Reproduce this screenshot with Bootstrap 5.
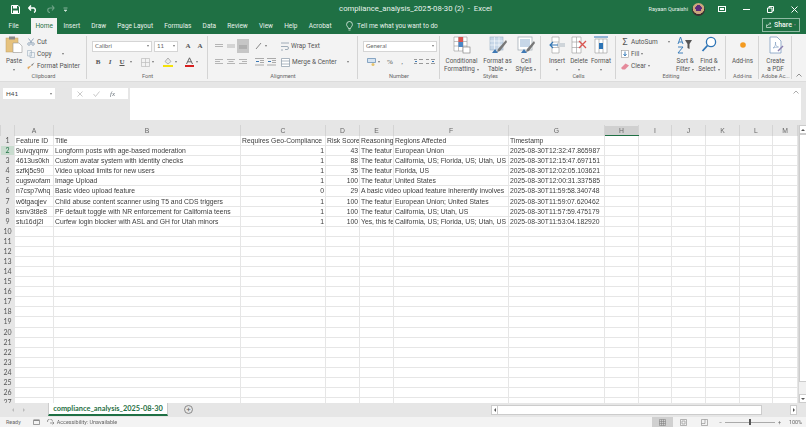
<!DOCTYPE html>
<html lang="en">
<head>
<meta charset="UTF-8">
<title>compliance_analysis_2025-08-30 (2) - Excel</title>
<link href="https://cdn.jsdelivr.net/npm/bootstrap@5.3.0/dist/css/bootstrap.min.css" rel="stylesheet">
<style>
html,body{height:100%;overflow:hidden}
body{background:#e6e6e6;color:#444;font-family:Roboto,"Open Sans",sans-serif;font-size:6.3px;line-height:8px;width:806px}
svg{display:block;flex:none}
.xl-app{width:806px;height:427px;display:flex;flex-direction:column;filter:blur(.35px)}
.xl-green{background:#1f7044;color:#e8f2ec}
.xl-title{height:18px;padding:0 0 0 11px}
.xl-side{flex:1 1 0;min-width:0}
.xl-doc{font-size:7.7px;white-space:pre;margin-left:14px}
.xl-name{font-size:5.5px;margin-right:4px}
.xl-avatar{width:13px;height:13px;border-radius:50%;background:radial-gradient(circle at 50% 40%,#5a2a7a 0 30%,#caa67c 32% 55%,#3a3030 60%);margin-right:5px}
.xl-winbtn{width:24px;display:flex;justify-content:center}
.xl-tabs{height:16px;padding-left:3px}
.xl-tab{padding:0 5.6px;font-size:6.5px;line-height:16px;color:#e8f2ec}
.xl-tab.active{background:#f3f3f3;color:#1f7044;padding:0 4px;margin:0 1px 0 7px}
.xl-tell{font-size:6.5px;margin-left:4px}
.xl-bulb{margin-left:9px}
.xl-share{width:38px;height:14px;margin:-2px 6px 0 auto;border:1px solid #8fbaa3;font-weight:600;font-size:7px;gap:2px}
.xl-ribbon{height:48px;background:#f3f3f3;flex:none;border-bottom:1px solid #dcdcdc}
.rb-group{display:flex;flex-direction:column;flex:none;position:relative;padding:0 1px}
.rb-group::after{content:"";position:absolute;right:0;top:2px;bottom:2px;width:1px;background:#d4d4d4}
.rb-body{flex:1;display:flex;min-height:0;padding-top:2px}
.rb-label{height:9px;line-height:9px;text-align:center;font-size:5.6px;color:#666}
.g-clip{width:87px}.g-font{width:121px}.g-align{width:150px}.g-num{width:82px}.g-styles{width:101px}.g-cells{width:75px}.g-edit{width:110px}.g-add{width:33px}.g-pdf{width:33px}
.rb-big{display:flex;flex-direction:column;align-items:center;text-align:center;white-space:nowrap;color:#555}
.rb-big svg{margin-bottom:3px}
.w-cf{width:35px;margin-left:3px}.w-ft{width:37px}.w-cs{width:20px}
.w-cell{width:22px}.w-cell:first-child{margin-left:4px}
.w-sort{width:24px}.w-find{width:24px}
.rb-paste{width:20px;margin:0 3px 0 3px}
.rb-editcol{width:52px;flex:none}
.rb-sigma{width:8px;font-size:9px;color:#555;text-align:center;line-height:10px}
.rb-row{display:flex;align-items:center;height:12px;white-space:nowrap}
.rb-small{font-size:6.5px;color:#555;gap:2px}
.xl-combo{height:11px;background:#fff;border:1px solid #d5d5d5;font-size:6px;padding:0 2px;color:#666;display:flex;align-items:center;justify-content:space-between;font-family:"Lato",sans-serif}
.c-font{width:60px}.c-size{width:24px;margin-left:2px}.c-num{width:74px}
.xl-caret{display:inline-block;flex:none;width:0;height:0;border:1.6px solid transparent;border-top:2px solid #777;border-bottom:0;margin-left:2px}
.xl-ico{width:12px;height:12px;display:flex;align-items:center;justify-content:center;flex:none;font-size:7px;color:#555;font-weight:700;font-family:"Liberation Serif",serif}
.xl-ico.on{background:#c6c6c6;height:14px}
.xl-lamp{width:1px;height:8px;margin:0 4px}
.xl-fbar{height:43px;flex:none;padding:6px 5px 5px 3px}
.xl-namebox{width:52px;height:11px;background:#fff;font-family:"Lato",sans-serif;font-size:6.3px;padding:0 3px}
.xl-fxbox{width:56px;height:11px;background:#fff;color:#aaa;padding:0 5px;gap:10px;margin-left:17px}
.xl-fx{font-family:"Liberation Serif",serif;font-size:7px}
.xl-input{width:671px;height:32px;background:#fff;margin-left:2px;padding:2px 2px 0 0;color:#888}
.xl-gridwrap{height:278px;flex:none;overflow:hidden;background:#fff}
.xl-sheet{table-layout:fixed;width:797px;--bs-border-color:#e6e6e6;--bs-table-color:#444;--bs-body-color:#444;font-family:"Liberation Sans",sans-serif;font-size:6.8px;line-height:9px;margin:0}
.xl-sheet th,.xl-sheet td{height:10.08px;padding:0 1px;overflow:hidden;white-space:nowrap;font-weight:400;color:#3c3c3c;border-color:#e6e6e6}
.xl-sheet thead th{background:#e6e6e6;text-align:center;color:#666;border-color:#d4d4d4}
.xl-sheet tbody th{background:#e6e6e6;text-align:center;color:#555;font-family:"Lato",sans-serif;font-size:7px;padding:0;border-color:#e6e6e6}
.xl-sheet tbody th.is-sel{background:#c9dccf;color:#1f7044}
.xl-sheet thead th.is-sel{background:#d0d0d0;border-bottom:1px solid #1f7044}
.xl-vscroll{width:9px;flex:none;background:#f0f0f0;border-left:1px solid #d8d8d8}
.xl-varrow{height:9px;background:#fff;border:1px solid #ccc}
.xl-vthumb{height:248px;background:#fff;border:1px solid #ccc}
.xl-arrow-up{width:0;height:0;border:2px solid transparent;border-bottom:2.5px solid #555;border-top:0}
.xl-arrow-dn{width:0;height:0;border:2px solid transparent;border-top:2.5px solid #555;border-bottom:0}
.xl-arrow-l{width:0;height:0;border:2px solid transparent;border-right:2.5px solid #555;border-left:0}
.xl-arrow-r{width:0;height:0;border:2px solid transparent;border-left:2.5px solid #555;border-right:0}
.xl-tabbar{height:14px;flex:none;background:#e6e6e6}
.xl-tabnav{width:48px;height:13px;gap:9px;padding-left:12px}
.xl-tabnav span{border-right-color:#bbb;border-left-color:#bbb}
.xl-sheettab{width:120px;height:13px;background:#fff;color:#1f7044;font-weight:700;font-size:7.4px;border-bottom:2px solid #1f7044;border-left:1px solid #ccc;border-right:1px solid #ccc;text-align:center;line-height:11px;font-family:"Lato",sans-serif}
.xl-addsheet{width:9px;height:9px;border:1px solid #888;border-radius:50%;margin:2px 0 0 16px;color:#666;font-size:8px;line-height:7px;text-align:center}
.xl-hbar{margin-left:auto;margin-right:9px;width:306px;height:10px;margin-top:2px}
.xl-hbtn{width:7px;height:10px;background:#fff;border:1px solid #ccc}
.xl-hthumb{width:264px;height:10px;background:#fff;border:1px solid #ccc;border-left:0}
.xl-hrest{flex:1}
.xl-status{height:10px;flex:none;background:#f3f3f3;color:#666;font-size:5.4px;padding-left:6px}
.st-cal{margin-left:12px}
.st-acc{margin:0 2px 0 7px}
.xl-view{width:21px;height:10px}
.xl-view.on{background:#d0d0d0}
.xl-zoom{width:50px;height:1px;background:#aaa;margin:0 3px}
.xl-knob{width:2px;height:6px;background:#555}
</style>
</head>
<body>
<div class="xl-app">

  <!-- title bar -->
  <div class="xl-green xl-title d-flex align-items-center">
    <div class="xl-side d-flex align-items-center gap-2">
      <svg width="9" height="9" viewBox="0 0 9 9"><path d="M.5.5h6.500l1.500 1.500v6.500h-8z" fill="none" stroke="#fff"/><path d="M2 1h4v2.500H2zM2 5.500h5v3H2z" fill="#fff"/></svg>
      <svg width="10" height="8" viewBox="0 0 10 8"><path d="M1 3h5a2.500 2.500 0 0 1 0 4.500M3 .5 .8 3 3 5.500" fill="none" stroke="#fff" stroke-width="1.400"/></svg>
      <svg width="9" height="8" viewBox="0 0 9 8"><path d="M8 3H4a2 2 0 0 0 0 4.500M6 .5 8 3 6 5.500" fill="none" stroke="#6fa388" stroke-width="1.200"/></svg>
      <svg width="5" height="5" viewBox="0 0 5 5"><path d="M.5 1h4M1 3l1.500 1.500L4 3z" stroke="#cfe3d8" stroke-width=".6" fill="#cfe3d8"/></svg>
    </div>
    <div class="xl-doc">compliance_analysis_2025-08-30 (2)  -  Excel</div>
    <div class="xl-side d-flex align-items-center justify-content-end">
      <span class="xl-name">Rayaan Quraishi</span>
      <div class="xl-avatar"></div>
      <div class="xl-winbtn"><svg width="8" height="6" viewBox="0 0 8 6"><rect x=".5" y=".5" width="7" height="5" fill="none" stroke="#fff"/><path d="M2 2h4v2H2z" fill="#fff"/></svg></div>
      <div class="xl-winbtn"><svg width="7" height="1" viewBox="0 0 7 1"><path d="M0 .5h7" stroke="#fff"/></svg></div>
      <div class="xl-winbtn"><svg width="7" height="7" viewBox="0 0 7 7"><path d="M.5 2h4.500v4.500H.5zM2 2V.5h4.500V5H5" fill="none" stroke="#fff"/></svg></div>
      <div class="xl-winbtn"><svg width="7" height="7" viewBox="0 0 7 7"><path d="M.5.5l6 6M6.500.5l-6 6" stroke="#fff"/></svg></div>
    </div>
  </div>

  <!-- tabs -->
  <div class="xl-green xl-tabs d-flex align-items-center">
    <div class="xl-tab">File</div>
    <div class="xl-tab active">Home</div>
    <div class="xl-tab">Insert</div>
    <div class="xl-tab">Draw</div>
    <div class="xl-tab">Page Layout</div>
    <div class="xl-tab">Formulas</div>
    <div class="xl-tab">Data</div>
    <div class="xl-tab">Review</div>
    <div class="xl-tab">View</div>
    <div class="xl-tab">Help</div>
    <div class="xl-tab">Acrobat</div>
    <svg class="xl-bulb" width="7" height="10" viewBox="0 0 7 10"><path d="M2.500 7.500C2.300 6 .6 5.500.6 3.400a2.900 2.900 0 0 1 5.800 0C6.400 5.500 4.700 6 4.500 7.500zM2.500 9h2" fill="none" stroke="#e8f2ec" stroke-width=".8"/></svg>
    <div class="xl-tell">Tell me what you want to do</div>
    <div class="xl-share d-flex align-items-center justify-content-center">
      <svg width="6" height="6" viewBox="0 0 6 6"><path d="M.5 2.500v3h4.500v-1M1.500 4c.2-1.500 1.500-2.500 3-2.500M3.500.3l1.500 1.200-1.500 1.200" fill="none" stroke="#fff" stroke-width=".6"/></svg>
      Share
      <span class="xl-caret m-0"></span>
    </div>
  </div>

  <!-- ribbon -->
  <div class="xl-ribbon d-flex">
    <div class="rb-group g-clip">
      <div class="rb-body">
        <div class="rb-big rb-paste">
          <svg class="mb-1" width="18" height="17" viewBox="0 0 18 17"><rect x="1" y="2" width="12" height="14" fill="#e6c27e" stroke="#bfa06a" stroke-width=".5"/><rect x="4" y=".5" width="6" height="3" fill="#8a8a8a"/><path d="M8 7h6l3 3v6.500H8z" fill="#fff" stroke="#999" stroke-width=".6"/></svg>
          Paste<span class="xl-caret mt-1 ms-0"></span>
        </div>
        <div class="d-flex flex-column">
          <div class="rb-row rb-small"><svg width="8" height="8" viewBox="0 0 8 8"><path d="M1.500.5 5 5M6.500.5 3 5" stroke="#7d95ad" stroke-width=".8"/><circle cx="2" cy="6" r="1.300" fill="none" stroke="#7d95ad" stroke-width=".7"/><circle cx="6" cy="6" r="1.300" fill="none" stroke="#7d95ad" stroke-width=".7"/></svg>Cut</div>
          <div class="rb-row rb-small"><svg width="8" height="8" viewBox="0 0 8 8"><path d="M.5.5h4v5.500h-4zM3 2.500h4.500v5H3z" fill="#eef2f5" stroke="#9fb0bf" stroke-width=".6"/></svg>Copy<span class="xl-caret ms-2"></span></div>
          <div class="rb-row rb-small"><svg width="8" height="8" viewBox="0 0 8 8"><path d="M4 3 7.500.5 5 4z" fill="#777"/><path d="M4.500 3.500 1 7.500 .5 5z" fill="#e0a45a"/></svg>Format Painter</div>
        </div>
      </div>
      <div class="rb-label">Clipboard</div>
    </div>

    <div class="rb-group g-font">
      <div class="rb-body ps-1 flex-column">
        <div class="rb-row mt-1">
          <div class="xl-combo c-font">Calibri<span class="xl-caret"></span></div>
          <div class="xl-combo c-size">11<span class="xl-caret"></span></div>
          <div class="xl-ico ms-1">A</div><div class="xl-ico">A</div>
        </div>
        <div class="rb-row mt-1">
          <div class="xl-ico">B</div><div class="xl-ico fst-italic">I</div><div class="xl-ico text-decoration-underline">U</div><span class="xl-caret"></span>
          <span class="xl-lamp"></span>
          <svg width="9" height="9" viewBox="0 0 9 9"><path d="M.5.5h8v8h-8zM.5 4.500h8M4.500.5v8" fill="none" stroke="#bbb" stroke-width=".7"/></svg><span class="xl-caret"></span>
          <span class="xl-lamp"></span>
          <svg width="10" height="10" viewBox="0 0 10 10"><path d="M5 1 8 4.500 5 7 2 4.500z" fill="#e9e9e9" stroke="#888" stroke-width=".6"/><rect y="8" width="10" height="2" fill="#f4e20a"/></svg><span class="xl-caret"></span>
          <svg class="ms-2" width="9" height="10" viewBox="0 0 9 10"><path d="M1.500 7 4.500.8 7.500 7M2.700 4.800h3.600" fill="none" stroke="#555" stroke-width=".9"/><rect y="8" width="9" height="2" fill="#d81f1f"/></svg><span class="xl-caret"></span>
        </div>
      </div>
      <div class="rb-label">Font</div>
    </div>

    <div class="rb-group g-align">
      <div class="rb-body ps-1">
        <div class="d-flex flex-column">
          <div class="rb-row mt-1">
            <div class="xl-ico"><svg width="8" height="5" viewBox="0 0 8 5"><path d="M0 .5h8M0 2.500h8" stroke="#b5b5b5"/></svg></div>
            <div class="xl-ico"><svg width="8" height="5" viewBox="0 0 8 5"><path d="M0 1h8M0 3h8" stroke="#b5b5b5"/></svg></div>
            <div class="xl-ico on"><svg width="8" height="5" viewBox="0 0 8 5"><path d="M0 2h8M0 4h8" stroke="#999"/></svg></div>
            <div class="xl-ico ms-1"><svg width="9" height="8" viewBox="0 0 9 8"><path d="M1 7 6 1" stroke="#888"/></svg></div><span class="xl-caret ms-0"></span>
          </div>
          <div class="rb-row mt-1">
            <div class="xl-ico"><svg width="8" height="6" viewBox="0 0 8 6"><path d="M0 .5h8M0 2.500h5M0 4.500h8" stroke="#b5b5b5"/></svg></div>
            <div class="xl-ico"><svg width="8" height="6" viewBox="0 0 8 6"><path d="M0 .5h8M1.500 2.500h5M0 4.500h8" stroke="#b5b5b5"/></svg></div>
            <div class="xl-ico"><svg width="8" height="6" viewBox="0 0 8 6"><path d="M0 .5h8M3 2.500h5M0 4.500h8" stroke="#b5b5b5"/></svg></div>
            <div class="xl-ico ms-1"><svg width="9" height="8" viewBox="0 0 9 8"><path d="M0 .5h9M5 2.500h4M5 4.500h4M0 7h9" stroke="#aaa"/><path d="M1 3.500h3" stroke="#3a78b5"/></svg></div>
            <div class="xl-ico"><svg width="9" height="8" viewBox="0 0 9 8"><path d="M0 .5h9M5 2.500h4M5 4.500h4M0 7h9" stroke="#aaa"/><path d="M1 3.500h3" stroke="#3a78b5"/></svg></div>
          </div>
        </div>
        <div class="d-flex flex-column ms-1">
          <div class="rb-row rb-small mt-1"><svg width="8" height="9" viewBox="0 0 8 9"><path d="M0 1h8M0 4.500h6a1.500 1.500 0 0 1 0 3H4M0 8h2" fill="none" stroke="#8a9aa8" stroke-width=".8"/></svg>Wrap Text</div>
          <div class="rb-row rb-small mt-1"><svg width="9" height="9" viewBox="0 0 9 9"><path d="M.5.5h8v8h-8zM.5 3h8M.5 6h8" fill="#fff" stroke="#8a9aa8" stroke-width=".7"/></svg>Merge &amp; Center<span class="xl-caret ms-2"></span></div>
        </div>
      </div>
      <div class="rb-label">Alignment</div>
    </div>

    <div class="rb-group g-num">
      <div class="rb-body flex-column ps-1">
        <div class="rb-row mt-1"><div class="xl-combo c-num">General<span class="xl-caret"></span></div></div>
        <div class="rb-row mt-1">
          <svg class="ms-1" width="9" height="8" viewBox="0 0 9 8"><path d="M.5.5h8v4h-8z" fill="#d5e4f2" stroke="#5f87ad" stroke-width=".7"/><circle cx="6" cy="6.500" r="1.500" fill="#e5c36e"/></svg><span class="xl-caret"></span>
          <div class="xl-ico ms-1 fw-normal">%</div>
          <div class="xl-ico fw-normal">,</div>
          <div class="xl-ico ms-1"><svg width="9" height="8" viewBox="0 0 9 8"><path d="M0 1.500h3M5 1.500h4M0 5.500h3M5 5.500h4" stroke="#999"/><path d="M1 3.500h2" stroke="#3a78b5"/></svg></div>
          <div class="xl-ico"><svg width="9" height="8" viewBox="0 0 9 8"><path d="M0 1.500h3M5 1.500h4M0 5.500h3M5 5.500h4" stroke="#999"/><path d="M6 3.500h2" stroke="#3a78b5"/></svg></div>
        </div>
      </div>
      <div class="rb-label">Number</div>
    </div>

    <div class="rb-group g-styles">
      <div class="rb-body">
        <div class="rb-big w-cf">
          <svg width="18" height="18" viewBox="0 0 18 18"><path d="M1 1h13v14H1zM1 5.500h13M1 10h13M5.500 1v14M10 1v14" fill="#fff" stroke="#999" stroke-width=".6"/><rect x="5.500" y="1" width="4.500" height="5" fill="#d9534f"/><rect x="5.500" y="6" width="4.500" height="5" fill="#4a86c5"/><rect x="10" y="11" width="7" height="6" fill="#fff" stroke="#777" stroke-width=".6"/></svg>
          Conditional<span>Formatting<span class="xl-caret"></span></span>
        </div>
        <div class="rb-big w-ft">
          <svg width="18" height="18" viewBox="0 0 18 18"><rect x="1" y="1" width="13" height="13" fill="#c7d7e8" stroke="#9db2c7" stroke-width=".6"/><path d="M1 5h13M1 9h13M5.500 1v13M10 1v13" stroke="#fff" stroke-width=".6"/><path d="M17 4 9 13l-1 3 3-1 7-9z" fill="#777"/><path d="M3 17l3-4 3 4z" fill="#3e78b3"/></svg>
          Format as<span>Table<span class="xl-caret"></span></span>
        </div>
        <div class="rb-big w-cs">
          <svg width="18" height="18" viewBox="0 0 18 18"><rect x="1" y="1" width="14" height="13" fill="#fff" stroke="#9aa5b0" stroke-width=".7"/><rect x="3" y="3" width="10" height="8" fill="#c7d7e8"/><path d="M17 5 10 13l-1 3 3-1 6-8z" fill="#777"/><path d="M4 17l3-4 3 4z" fill="#3e78b3"/></svg>
          Cell<span>Styles<span class="xl-caret"></span></span>
        </div>
      </div>
      <div class="rb-label">Styles</div>
    </div>

    <div class="rb-group g-cells">
      <div class="rb-body">
        <div class="rb-big w-cell">
          <svg width="16" height="18" viewBox="0 0 16 18"><path d="M3 1h7v16H3zM3 6h7M3 11.500h7" fill="#fff" stroke="#999" stroke-width=".6"/><rect x="8" y="7" width="8" height="4" fill="#cfd5da"/><path d="M9 9H1M4 6 1 9l3 3" fill="none" stroke="#2e75b6" stroke-width="1.100"/></svg>
          Insert<span class="xl-caret mt-1 ms-0"></span>
        </div>
        <div class="rb-big w-cell">
          <svg width="18" height="18" viewBox="0 0 18 18"><path d="M2 1h9v16H2zM2 6h9M2 11.500h9M6.500 1v16" fill="#fff" stroke="#999" stroke-width=".6"/><path d="M9 5l7 7M16 5l-7 7" stroke="#d9534f" stroke-width="1.300"/></svg>
          Delete<span class="xl-caret mt-1 ms-0"></span>
        </div>
        <div class="rb-big w-cell">
          <svg width="16" height="18" viewBox="0 0 16 18"><path d="M2 3h12v14H2zM6 3v14M10 3v14" fill="#fff" stroke="#999" stroke-width=".6"/><rect x="6" y="7" width="4" height="6" fill="#2e75b6"/><path d="M1 1h14" stroke="#2e75b6"/></svg>
          Format<span class="xl-caret mt-1 ms-0"></span>
        </div>
      </div>
      <div class="rb-label">Cells</div>
    </div>

    <div class="rb-group g-edit">
      <div class="rb-body ps-1">
        <div class="d-flex flex-column rb-editcol">
          <div class="rb-row rb-small"><span class="rb-sigma">Σ</span>AutoSum<span class="xl-caret ms-2"></span></div>
          <div class="rb-row rb-small"><svg width="8" height="8" viewBox="0 0 8 8"><rect x=".5" y=".5" width="7" height="7" fill="#fff" stroke="#999" stroke-width=".6"/><path d="M4 1.500v4M2.500 4 4 6l1.500-2" fill="none" stroke="#2e75b6" stroke-width=".9"/></svg>Fill<span class="xl-caret m-0"></span></div>
          <div class="rb-row rb-small"><svg width="8" height="7" viewBox="0 0 8 7"><path d="M0 5 4.500 .5 8 2.500 4 6.500H1.500z" fill="#e58a9b"/></svg>Clear<span class="xl-caret m-0"></span></div>
        </div>
        <div class="rb-big w-sort">
          <svg width="16" height="18" viewBox="0 0 16 18"><path d="M1 8 3.500 1 6 8M2 6h3M1 11h5l-5 6h5" fill="none" stroke="#2e75b6" stroke-width=".9"/><path d="M8 4h7l-2.500 4v5l-2-1V8z" fill="#555"/></svg>
          Sort &amp;<span>Filter<span class="xl-caret"></span></span>
        </div>
        <div class="rb-big w-find">
          <svg width="16" height="18" viewBox="0 0 16 18"><circle cx="10" cy="6" r="4.600" fill="#fff" stroke="#2e75b6" stroke-width="1.300"/><path d="M6.500 9.500 1.500 15" stroke="#2e75b6" stroke-width="1.800"/></svg>
          Find &amp;<span>Select<span class="xl-caret"></span></span>
        </div>
      </div>
      <div class="rb-label">Editing</div>
    </div>

    <div class="rb-group g-add">
      <div class="rb-body justify-content-center">
        <div class="rb-big">
          <svg width="18" height="18" viewBox="0 0 18 18"><circle cx="9" cy="9" r="2.800" fill="#f39a1f"/></svg>
          Add-ins
        </div>
      </div>
      <div class="rb-label">Add-ins</div>
    </div>

    <div class="rb-group g-pdf">
      <div class="rb-body justify-content-center">
        <div class="rb-big">
          <svg width="16" height="18" viewBox="0 0 16 18"><path d="M2 1h7l4 4v12H2z" fill="#fff" stroke="#7d9cc0" stroke-width=".8"/><path d="M5 12c2-1 3-4 2.500-6-.5 3 1 5 3 5-2 0-4 .5-5.500 1z" fill="none" stroke="#7d9cc0" stroke-width=".6"/><path d="M15 10l-5 5" stroke="#8a7fb0" stroke-width="1.400"/></svg>
          Create<span>a PDF</span>
        </div>
      </div>
      <div class="rb-label">Adobe Ac...</div>
    </div>

    <div class="d-flex align-items-end flex-grow-1 justify-content-center pb-1">
      <svg width="6" height="4" viewBox="0 0 6 4"><path d="M.5 3.500 3 1l2.500 2.500" fill="none" stroke="#666" stroke-width=".7"/></svg>
    </div>
  </div>

  <!-- formula bar -->
  <div class="xl-fbar d-flex align-items-start">
    <div class="xl-namebox d-flex align-items-center justify-content-between">H41<span class="xl-caret"></span></div>
    <div class="xl-fxbox d-flex align-items-center">
      <svg width="6" height="6" viewBox="0 0 6 6"><path d="M.5.5l5 5M5.500.5l-5 5" stroke="#b5b5b5" stroke-width=".7"/></svg>
      <svg width="7" height="6" viewBox="0 0 7 6"><path d="M.5 3l2 2.500 4-5" fill="none" stroke="#b5b5b5" stroke-width=".7"/></svg>
      <span class="fst-italic text-secondary xl-fx">fx</span>
    </div>
    <div class="xl-input d-flex justify-content-end">
      <svg width="6" height="4" viewBox="0 0 6 4"><path d="M.5 3.500 3 1l2.500 2.500" fill="none" stroke="#888" stroke-width=".7"/></svg>
    </div>
  </div>

  <!-- sheet -->
  <div class="d-flex xl-gridwrap">
    <table class="table table-bordered xl-sheet">
      <colgroup id="sheetCols"></colgroup>
      <thead><tr id="sheetHead"></tr></thead>
      <tbody id="sheetBody"></tbody>
    </table>
    <div class="xl-vscroll d-flex flex-column">
      <div class="xl-varrow d-flex align-items-center justify-content-center"><span class="xl-arrow-up"></span></div>
      <div class="xl-vthumb"></div>
      <div class="flex-grow-1"></div>
      <div class="xl-varrow d-flex align-items-center justify-content-center"><span class="xl-arrow-dn"></span></div>
    </div>
  </div>

  <!-- sheet tabs -->
  <div class="xl-tabbar d-flex align-items-start">
    <div class="xl-tabnav d-flex align-items-center"><span class="xl-arrow-l"></span><span class="xl-arrow-r"></span></div>
    <div class="xl-sheettab">compliance_analysis_2025-08-30</div>
    <div class="xl-addsheet">+</div>
    <div class="xl-hbar d-flex">
      <div class="xl-hbtn d-flex align-items-center justify-content-center"><span class="xl-arrow-l"></span></div>
      <div class="xl-hthumb"></div>
      <div class="xl-hrest"></div>
      <div class="xl-hbtn d-flex align-items-center justify-content-center"><span class="xl-arrow-r"></span></div>
    </div>
  </div>

  <!-- status bar -->
  <div class="xl-status d-flex align-items-center">
    <span>Ready</span>
    <svg class="st-cal" width="7" height="6" viewBox="0 0 7 6"><path d="M.5 1.500h6v4h-6z" fill="none" stroke="#777" stroke-width=".7"/><path d="M.5.5h6v1h-6z" fill="#777"/></svg>
    <svg class="st-acc" width="8" height="6" viewBox="0 0 8 6"><path d="M.5 3a2.500 2.500 0 0 1 5-1M3 4h4M5.500 2.500 7 4 5.500 5.500" fill="none" stroke="#777" stroke-width=".7"/></svg>
    <span>Accessibility: Unavailable</span>
    <div class="ms-auto d-flex align-items-center">
      <div class="xl-view on d-flex align-items-center justify-content-center"><svg width="7" height="7" viewBox="0 0 7 7"><path d="M.5.5h6v6h-6zM.5 2.500h6M.5 4.500h6M2.500.5v6M4.500.5v6" fill="none" stroke="#777" stroke-width=".5"/></svg></div>
      <div class="xl-view d-flex align-items-center justify-content-center"><svg width="7" height="7" viewBox="0 0 7 7"><path d="M.5.5h6v6h-6zM2 2h3v3H2z" fill="none" stroke="#888" stroke-width=".6"/></svg></div>
      <div class="xl-view d-flex align-items-center justify-content-center"><svg width="7" height="7" viewBox="0 0 7 7"><path d="M.5.5h6v6h-6zM.5 4.500h3.500V.5" fill="none" stroke="#888" stroke-width=".6"/></svg></div>
      <span class="ms-1">−</span>
      <div class="xl-zoom d-flex align-items-center justify-content-center"><span class="xl-knob"></span></div>
      <span>+</span>
      <span class="ms-2 me-1">100%</span>
    </div>
  </div>
</div>

<script>
    const colWidths = [14, 39, 187, 85, 34, 34, 115, 96, 34, 33, 34, 34, 33, 25];
    const letters = ["", "A", "B", "C", "D", "E", "F", "G", "H", "I", "J", "K", "L", "M"];
    const rows = [
        ["Feature ID", "Title", "Requires Geo-Compliance", "Risk Score", "Reasoning", "Regions Affected", "Timestamp"],
        ["9uivqyqmv", "Longform posts with age-based moderation", 1, 43, "The featur", "European Union", "2025-08-30T12:32:47.865987"],
        ["4613us0kh", "Custom avatar system with identity checks", 1, 88, "The featur", "California, US; Florida, US; Utah, US", "2025-08-30T12:15:47.697151"],
        ["szfkj5c90", "Video upload limits for new users", 1, 35, "The featur", "Florida, US", "2025-08-30T12:02:05.103621"],
        ["cugswofam", "Image Upload", 1, 100, "The featur", "United States", "2025-08-30T12:00:31.337585"],
        ["n7csp7whq", "Basic video upload feature", 0, 29, "A basic video upload feature inherently involves", null, "2025-08-30T11:59:58.340748"],
        ["w6tgaqjev", "Child abuse content scanner using T5 and CDS triggers", 1, 100, "The featur", "European Union; United States", "2025-08-30T11:59:07.620462"],
        ["ksnv3t8e8", "PF default toggle with NR enforcement for California teens", 1, 100, "The featur", "California, US; Utah, US", "2025-08-30T11:57:59.475179"],
        ["stu16dj2l", "Curfew login blocker with ASL and GH for Utah minors", 1, 100, "Yes, this fe", "California, US; Florida, US; Utah, US", "2025-08-30T11:53:04.182920"]
    ];

    document.getElementById("sheetCols").innerHTML = colWidths.map(w => `<col width="${w}">`).join("");
    document.getElementById("sheetHead").innerHTML = letters.map(l => `<th class="${l === "H" ? "is-sel" : ""}">${l}</th>`).join("");

    let body = "";
    for (let r = 0; r < 27; r++) {
        const row = rows[r] || [];
        let cells = `<th class="${r === 1 ? "is-sel" : ""}">${r + 1}</th>`;
        for (let c = 0; c < 13; c++) {
            const v = row[c];
            if (v === null) continue;
            const numeric = typeof v === "number";
            const span = row[c + 1] === null ? ' colspan="2"' : "";
            cells += `<td class="${numeric ? "text-end" : ""}"${span}>${v === undefined ? "" : v}</td>`;
        }
        body += `<tr>${cells}</tr>`;
    }
    document.getElementById("sheetBody").innerHTML = body;
</script>
<script src="https://cdn.jsdelivr.net/npm/bootstrap@5.3.0/dist/js/bootstrap.bundle.min.js"></script>
</body>
</html>
